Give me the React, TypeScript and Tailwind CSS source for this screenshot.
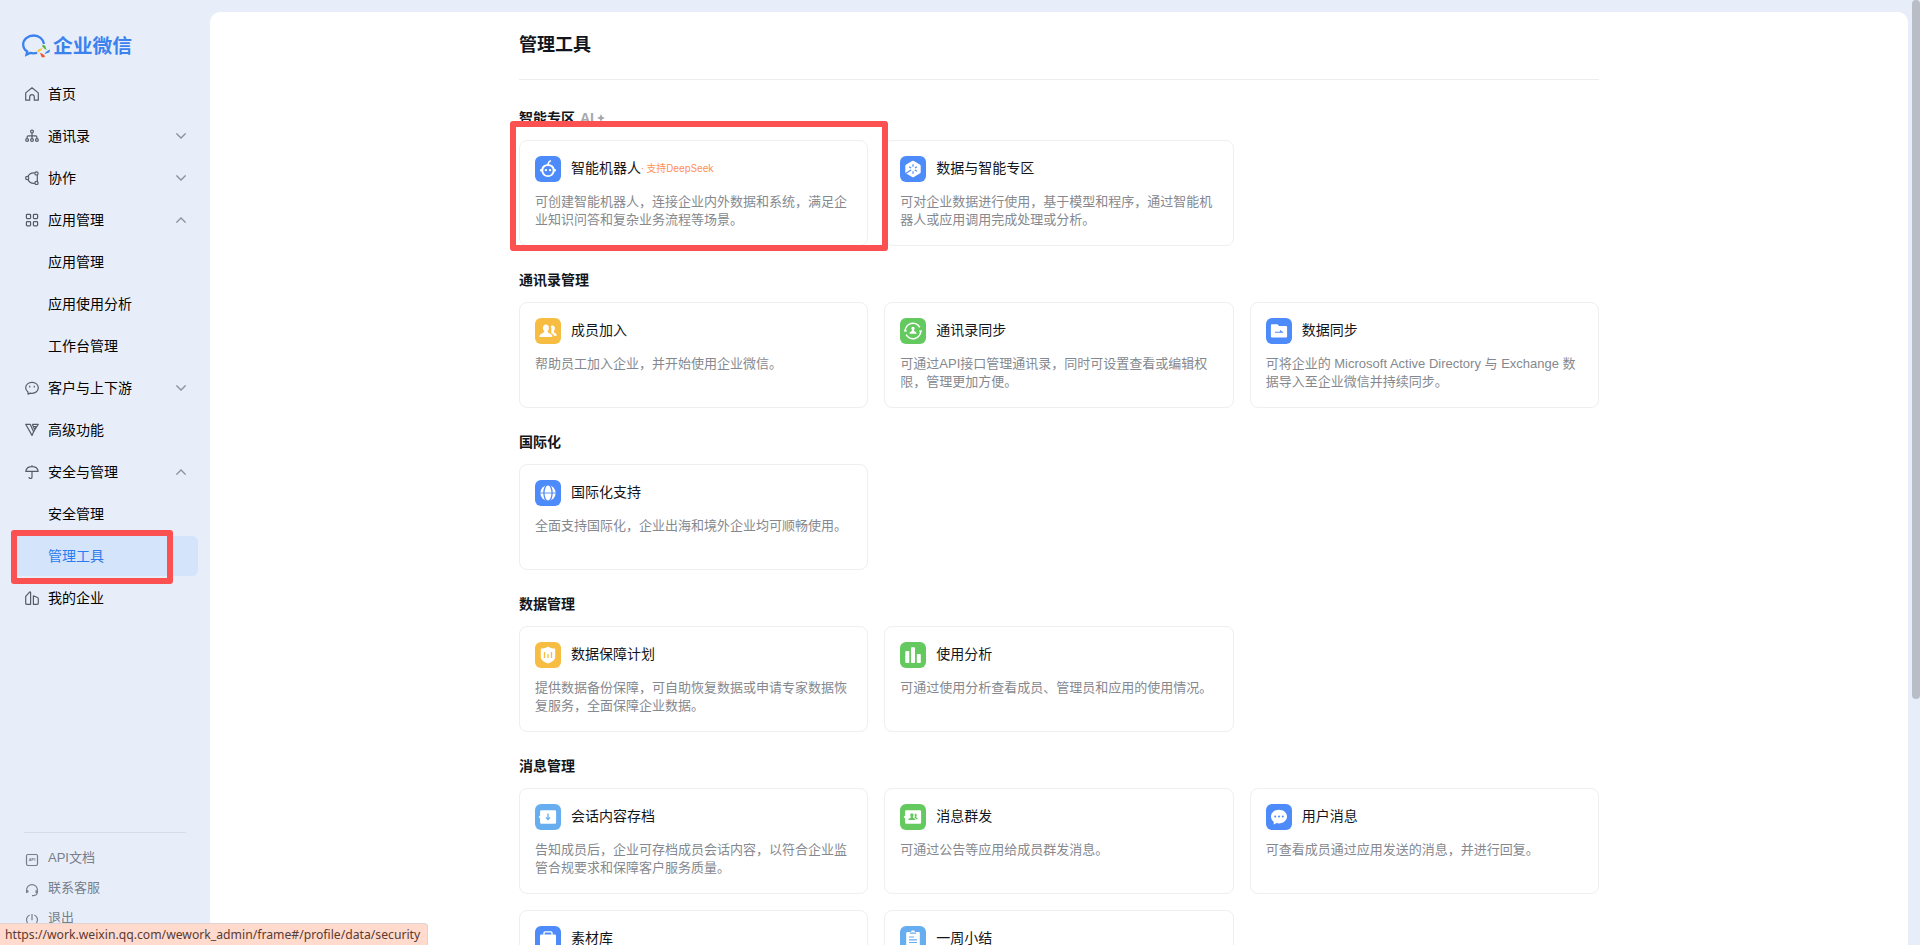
import { ReactNode } from "react";

type NavItem = {
  label: string;
  icon?: ReactNode;
  arrow?: "up" | "down";
  active?: boolean;
};

type Tool = {
  title: string;
  desc?: string;
  color: string;
  icon: ReactNode;
  tag?: string;
};

type Section = {
  title: string;
  ai?: boolean;
  tools: Tool[];
};

const BLUE = "bg-[#4d8bfa]";
const GREEN = "bg-[#64c95f]";
const YELLOW = "bg-[#f6bd42]";
const SKY = "bg-[#66aeef]";

const navItems: NavItem[] = [
  {
    label: "首页",
    icon: <path d="M.7 5.9 7 .8l6.300 5.100v7.300H9.300V9.900a2.300 2.300 0 0 0-4.600 0v3.300H.7Z" />,
  },
  {
    label: "通讯录",
    arrow: "down",
    icon: (
      <>
        <circle cx="7" cy="2.600" r="1.400" />
        <circle cx="2.100" cy="11" r="1.400" />
        <circle cx="7" cy="11" r="1.400" />
        <circle cx="11.900" cy="11" r="1.400" />
        <path d="M7 4v5.600M2.100 9.600V8.200q0-1.300 1.300-1.300h7.200q1.300 0 1.300 1.300v1.400" />
      </>
    ),
  },
  {
    label: "协作",
    arrow: "down",
    icon: (
      <>
        <circle cx="2.200" cy="7" r="1.600" />
        <circle cx="11.500" cy="2.400" r="1.600" />
        <circle cx="11.500" cy="11.900" r="1.600" />
        <path d="M3 5.500C4.200 3 6.500 1.600 9.800 2M12.300 4v6.300M3 8.500C4.200 11.300 6.500 12.700 9.800 12.400" />
      </>
    ),
  },
  {
    label: "应用管理",
    arrow: "up",
    icon: (
      <>
        <rect x="1.400" y="1.400" width="4.200" height="4.200" rx=".8" />
        <rect x="8.400" y="1.400" width="4.200" height="4.200" rx=".8" />
        <rect x="1.400" y="8.600" width="4.200" height="4.200" rx=".8" />
        <rect x="8.400" y="8.600" width="4.200" height="4.200" rx=".8" />
      </>
    ),
  },
  { label: "应用管理" },
  { label: "应用使用分析" },
  { label: "工作台管理" },
  {
    label: "客户与上下游",
    arrow: "down",
    icon: (
      <>
        <path d="M3 11.100C1.500 10 .7 8.500.7 6.800.7 3.600 3.500 1.300 7 1.300s6.300 2.300 6.300 5.500-2.800 5.500-6.300 5.500c-.7 0-1.200 0-1.800-.2L3.100 13.200Z" />
        <path d="M4.700 4.700v1.800M9.300 4.700v1.800" />
      </>
    ),
  },
  {
    label: "高级功能",
    icon: (
      <>
        <path d="M.7 1.300h4.500L8.600 8.800 7 12.400Z" />
        <path d="M7.300 1.300h6L8.600 8.800M7.300 1.300l2.300 5.200 1.700-3H8.300" />
      </>
    ),
  },
  {
    label: "安全与管理",
    arrow: "up",
    icon: <path d="M7 .2v1.400M.8 6.400C1.200 3.400 3.700 1.600 7 1.600s5.800 1.800 6.200 4.800ZM7 6.400v5.500q0 1.600-1.500 1.600T4 12.100" />,
  },
  { label: "安全管理" },
  { label: "管理工具", active: true },
  {
    label: "我的企业",
    icon: (
      <>
        <path d="M5.600 13.300H1.700q-1 0-1-1V5.400L4.800.9l.8.400Z" />
        <path d="M8.400 4.800l4 1.700q.9.400.9 1.300v4.500q0 1-1 1H8.400Z" />
      </>
    ),
  },
];

const footerItems: NavItem[] = [
  {
    label: "API文档",
    icon: (
      <>
        <rect x="1.500" y="1.500" width="11" height="11" rx="1.400" />
        <text x="7" y="8.200" fontSize="4" textAnchor="middle" fontWeight="bold" fill="currentColor" stroke="none">
          API
        </text>
      </>
    ),
  },
  {
    label: "联系客服",
    icon: <path d="M2.400 9.500h-.8V7a5.400 5.400 0 0 1 10.800 0v2.500h-1.300V7.200M2.800 7.200v2.300M12.200 9.500q-.3 3-3.700 3.100H7" />,
  },
  {
    label: "退出",
    icon: <path d="M4.600 2A5.500 5.500 0 1 0 9.400 2M7 1v6.200" />,
  },
];

const people = (
  <>
    <path d="M17.500 7.500c1.500 0 2.400 1.200 2.400 2.800 0 1.200-.5 2.200-1 2.800-.3.900 0 1.300 1 1.800 1.200.6 1.900 1.300 1.900 2.800h-3.100c-.4-1.300-1.300-2-2.700-2.700.4-.7.300-1.400.2-2 .5-1.500.4-3.300-.5-4.600.5-.6 1.100-.9 1.800-.9Z" />
    <path d="M10.900 6.600c1.800 0 3 1.400 3 3.300 0 1.400-.6 2.500-1.200 3.200-.2 1 .2 1.500 1.300 2 1.900.8 3.300 1.700 3.400 3.900H4.300c.1-2.200 1.500-3.100 3.500-3.900 1.100-.5 1.500-1 1.300-2-.6-.7-1.200-1.800-1.200-3.200 0-1.900 1.200-3.300 3-3.300Z" />
  </>
);

const sections: Section[] = [
  {
    title: "智能专区",
    ai: true,
    tools: [
      {
        title: "智能机器人",
        tag: "支持DeepSeek",
        desc: "可创建智能机器人，连接企业内外数据和系统，满足企业知识问答和复杂业务流程等场景。",
        color: BLUE,
        icon: (
          <>
            <path d="M13 8.200c3.700 0 6.100 2 6.500 4.700.9 0 1.500.5 1.500 1.300s-.6 1.300-1.500 1.400C19 18.800 16.500 21 13 21s-6-2.200-6.500-5.400C5.600 15.500 5 15 5 14.200s.6-1.300 1.500-1.300C6.900 10.200 9.300 8.200 13 8.200Z" />
            <path d="M13 8.800c0-2 .9-3.300 2.900-4.200" fill="none" stroke="white" strokeWidth="1.500" />
            <path d="M13 9.900c-2.900 0-4.700 1.700-4.700 4.300 0 2.900 1.800 5 4.700 5s4.700-2.100 4.700-5c0-2.600-1.800-4.300-4.700-4.300Z" fill="#4d8bfa" />
            <circle cx="10.900" cy="14.100" r="1.200" />
            <circle cx="15.100" cy="14.100" r="1.200" />
          </>
        ),
      },
      {
        title: "数据与智能专区",
        desc: "可对企业数据进行使用，基于模型和程序，通过智能机器人或应用调用完成处理或分析。",
        color: BLUE,
        icon: (
          <>
            <path d="M12.100 5q.9-.5 1.800 0l5.900 3.400q.9.500.9 1.500v6.200q0 1-.9 1.500L13.900 21q-.9.500-1.800 0l-5.900-3.400q-.9-.5-.9-1.500V9.900q0-1 .9-1.500Z" />
            <path d="M13 8.300v2.500M13 15.200v2.500M9.100 10.700l2 1.200M16.900 10.700l-2 1.200M5.900 17.300l5.200-3.200M16.900 15.300l-2-1.200" stroke="#4d8bfa" strokeWidth="1.200" />
          </>
        ),
      },
    ],
  },
  {
    title: "通讯录管理",
    tools: [
      { title: "成员加入", desc: "帮助员工加入企业，并开始使用企业微信。", color: YELLOW, icon: people },
      {
        title: "通讯录同步",
        desc: "可通过API接口管理通讯录，同时可设置查看或编辑权限，管理更加方便。",
        color: GREEN,
        icon: (
          <>
            <path d="M5.300 13.300A7.700 7.700 0 0 1 19.800 9.400M20.700 12.700A7.700 7.700 0 0 1 6.200 16.600" fill="none" stroke="white" strokeWidth="1.500" />
            <path d="M3.700 13.600 5.200 11l2 2.600ZM22.300 12.400 20.800 15l-2-2.600Z" />
            <path d="M13 8.800c1 0 1.600.7 1.600 1.700 0 .8-.4 1.300-.7 1.800 0 1.500 2.600 1 2.600 3.500h-7c0-2.500 2.600-2 2.600-3.500-.3-.5-.7-1-.7-1.800 0-1 .6-1.700 1.600-1.700Z" />
          </>
        ),
      },
      {
        title: "数据同步",
        desc: "可将企业的 Microsoft Active Directory 与 Exchange 数据导入至企业微信并持续同步。",
        color: BLUE,
        icon: (
          <>
            <path d="M6 6.200h5.400l1.700 1.900H20q1.100 0 1.100 1.100v9.300q0 1.100-1.100 1.100H6q-1.100 0-1.100-1.100V7.300Q4.900 6.200 6 6.200Z" />
            <path d="M9 13.700h5V12l3.300 2.300v.5H9Z" fill="#4d8bfa" />
          </>
        ),
      },
    ],
  },
  {
    title: "国际化",
    tools: [
      {
        title: "国际化支持",
        desc: "全面支持国际化，企业出海和境外企业均可顺畅使用。",
        color: BLUE,
        icon: (
          <>
            <ellipse cx="13" cy="13" rx="7.700" ry="7.700" />
            <path d="M5 13h16" stroke="#4d8bfa" strokeWidth=".9" />
            <ellipse cx="13" cy="13" rx="4.100" ry="8.300" fill="none" stroke="#4d8bfa" strokeWidth="1.300" />
          </>
        ),
      },
    ],
  },
  {
    title: "数据管理",
    tools: [
      {
        title: "数据保障计划",
        desc: "提供数据备份保障，可自助恢复数据或申请专家数据恢复服务，全面保障企业数据。",
        color: YELLOW,
        icon: (
          <>
            <path d="M13 4.400c2 1.400 4.400 2.100 7.200 2.200v8.200c0 3.600-3.800 5.600-7.200 6.800-3.400-1.200-7.200-3.200-7.200-6.800V6.600c2.800-.1 5.200-.8 7.200-2.200Z" />
            <path d="M9.500 10v6M13 12v4M16.500 10v6" stroke="#f6bd42" strokeWidth="1.300" />
          </>
        ),
      },
      {
        title: "使用分析",
        desc: "可通过使用分析查看成员、管理员和应用的使用情况。",
        color: GREEN,
        icon: (
          <>
            <rect x="5.300" y="9" width="4" height="12" rx=".8" />
            <rect x="11" y="5.300" width="4" height="15.700" rx=".8" />
            <rect x="16.800" y="12" width="4" height="9" rx=".8" />
          </>
        ),
      },
    ],
  },
  {
    title: "消息管理",
    tools: [
      {
        title: "会话内容存档",
        desc: "告知成员后，企业可存档成员会话内容，以符合企业监管合规要求和保障客户服务质量。",
        color: SKY,
        icon: (
          <>
            <path d="M6.300 6.200h13.600q1.200 0 1.200 1.200v11.200q0 1.200-1.200 1.200H6.300q-1.200 0-1.200-1.200v-4L3.600 13l1.500-1.600v-4q0-1.200 1.200-1.200Z" />
            <path d="M13 9.500v6M10.900 13.400l2.100 2.200 2.100-2.200" fill="none" stroke="#66aeef" strokeWidth="1.300" />
          </>
        ),
      },
      {
        title: "消息群发",
        desc: "可通过公告等应用给成员群发消息。",
        color: GREEN,
        icon: (
          <>
            <path d="M6.300 6.200h13.600q1.200 0 1.200 1.200v11.200q0 1.200-1.200 1.200H6.300q-1.200 0-1.200-1.200v-4L3.600 13l1.500-1.600v-4q0-1.200 1.200-1.200Z" />
            <g fill="#64c95f" transform="translate(6 5.800) scale(.54)">{people}</g>
          </>
        ),
      },
      {
        title: "用户消息",
        desc: "可查看成员通过应用发送的消息，并进行回复。",
        color: BLUE,
        icon: (
          <>
            <path d="M13 5.800c4.500 0 8 2.900 8 6.800s-3.500 6.800-8 6.800c-.9 0-1.700-.1-2.400-.3l-2.900 1.500.1-2.700C6 16.600 5 14.800 5 12.600c0-3.900 3.500-6.800 8-6.800Z" />
            <g fill="#4d8bfa">
              <circle cx="9.200" cy="12.600" r="1" />
              <circle cx="13" cy="12.600" r="1" />
              <circle cx="16.800" cy="12.600" r="1" />
            </g>
          </>
        ),
      },
      {
        title: "素材库",
        color: BLUE,
        icon: (
          <>
            <rect x="5" y="8.500" width="16" height="12.500" rx="1.300" />
            <path d="M9 8.800V6.900q0-1 1-1h6q1 0 1 1v1.900" fill="none" stroke="white" strokeWidth="1.400" />
          </>
        ),
      },
      {
        title: "一周小结",
        color: SKY,
        icon: (
          <>
            <path d="M7.200 6h3l.6-.1a2.300 2.300 0 0 1 4.400 0l.6.100h3q1 0 1 1v14q0 1-1 1H7.200q-1 0-1-1V7q0-1 1-1Z" />
            <path d="M9.800 7.200h6.400M9 11h5.200M9 13.800h8M9 16.500h8" stroke="#66aeef" strokeWidth="1.200" />
          </>
        ),
      },
    ],
  },
];

export default function App() {
  return (
    <div className="relative flex h-[945px] w-[1920px] overflow-hidden bg-[#e7eefa] font-['Liberation_Sans','Noto_Sans_CJK_SC',sans-serif] text-sm text-black">
      <Sidebar />
      <main className="mt-3 h-[933px] w-[1698px] overflow-hidden rounded-t-[10px] bg-white">
        <div className="ml-[309px] w-[1080px]">
          <h1 className="flex h-[68px] items-center border-b border-[#ebedf0] pb-0.5 text-lg font-bold text-[#12161c]">
            管理工具
          </h1>
          <div className="flex flex-col gap-6 pt-7">
            {sections.map((section) => (
              <ToolSection key={section.title} section={section} />
            ))}
          </div>
        </div>
      </main>
      <div className="ml-1 h-[699px] w-2 rounded-full bg-[#b9bdc6]" />

      <div className="absolute left-[11px] top-[530px] h-[54px] w-[162px] rounded-[3px] border-[6px] border-[#fc5151]" />
      <div className="absolute left-[510px] top-[121px] h-[130px] w-[378px] rounded-[3px] border-[6px] border-[#fc5151]" />
      <div className="absolute bottom-0 left-0 flex h-[22px] w-[428px] items-center whitespace-nowrap rounded-tr border-r border-t border-[#e0d3d2] bg-[#ffdacd] pl-[5px] font-['Noto_Sans',sans-serif] text-[12.200px] text-[#5a3a33]">
        https://work.weixin.qq.com/wework_admin/frame#/profile/data/security
      </div>
    </div>
  );
}

function Sidebar() {
  return (
    <aside className="flex w-[210px] shrink-0 flex-col px-3">
      <div className="flex h-[74px] items-center pl-[10px] pt-[17px]">
        <Logo />
        <span className="ml-[3px] text-[19.800px] font-bold leading-6 text-[#3b82ee]">企业微信</span>
      </div>
      <nav className="flex flex-col gap-0.5">
        {navItems.map((item, i) => (
          <a
            key={i}
            className={`flex h-10 items-center rounded-md pl-[13px] pr-3 ${item.active ? "bg-[#d4e4fa] text-[#2b7cf0]" : ""}`}
          >
            <NavIcon className="text-[#565c66]">{item.icon}</NavIcon>
            <span className="ml-[9px] flex-1">{item.label}</span>
            {item.arrow && (
              <svg width="10" height="6" viewBox="0 0 10 6" fill="none" stroke="#8b919c" strokeWidth="1.300">
                <path d={item.arrow === "down" ? "M.4.4 5 5 9.600.4" : "M.4 5.600 5 1l4.600 4.600"} />
              </svg>
            )}
          </a>
        ))}
      </nav>
      <div className="mx-3 mt-auto border-t border-[#d5dce9] pt-[10px] text-[13px] text-[#787e89]">
        {footerItems.map((item) => (
          <a key={item.label} className="flex h-[30px] items-center pl-px">
            <NavIcon className="mt-[3px]">{item.icon}</NavIcon>
            <span className="ml-[9px]">{item.label}</span>
          </a>
        ))}
      </div>
      <div className="h-3" />
    </aside>
  );
}

function NavIcon({ children, className }: { children: ReactNode; className: string }) {
  return (
    <svg
      width="14"
      height="14"
      viewBox="0 0 14 14"
      fill="none"
      stroke="currentColor"
      strokeWidth="1.200"
      strokeLinejoin="round"
      className={`shrink-0 ${className}`}
    >
      {children}
    </svg>
  );
}

function Logo() {
  return (
    <svg width="28" height="24" viewBox="0 0 28 24" fill="none">
      <path
        d="M22 10C21.400 4.800 16.800 1.500 11.800 1.500 5.800 1.500 1.200 5.500 1.200 10.500c0 3 1.500 5.400 4 7l-.7 3.100 3.600-1.700c2.300.6 4.500.6 7 0"
        stroke="#3b82ee"
        strokeWidth="2.300"
      />
      <path d="M19.800 11.800q2.300-1.800 3.800.8 0 2.200 1.400 3.400-2.600-.5-5.200-4.200Z" fill="#4db93c" />
      <path d="M27.800 15.400q.6 2.800-2 3.600-2 .3-3.200 1.600.2-2.700 5.200-5.200Z" fill="#3b82ee" />
      <path d="M23.300 22.300q-2.200 2.200-4.200-.1-.2-2.200-1.600-3.500 3 .2 5.800 3.600Z" fill="#f0582f" />
      <path d="M15.500 18.800q-.8-2.600 1.700-3.700 2.200-.3 3.400-1.600-.3 3-5.100 5.300Z" fill="#fbc531" />
    </svg>
  );
}

function ToolSection({ section }: { section: Section }) {
  return (
    <section>
      <h2 className="flex h-5 items-center text-sm font-bold text-[#12161c]">
        {section.title}
        {section.ai && (
          <span className="ml-[5px] flex items-center text-sm text-[#a5a8ad]">
            AI
            <svg width="8" height="8" viewBox="0 0 8 8" fill="currentColor" className="ml-[3px]">
              <path d="M4 0 5.200 2.800 8 4 5.200 5.200 4 8 2.800 5.200 0 4l2.800-1.200Z" />
            </svg>
          </span>
        )}
      </h2>
      <div className="mt-3 grid grid-cols-3 gap-4">
        {section.tools.map((tool) => (
          <ToolCard key={tool.title} tool={tool} />
        ))}
      </div>
    </section>
  );
}

function ToolCard({ tool }: { tool: Tool }) {
  return (
    <div className="h-[106px] rounded-lg border border-[#eeeff1] p-[15px]">
      <div className="flex items-center">
        <svg width="26" height="26" viewBox="0 0 26 26" fill="white" className={`rounded-md ${tool.color}`}>
          {tool.icon}
        </svg>
        <h3 className="-mt-0.5 ml-[10px] leading-5 text-[#12161c]">{tool.title}</h3>
        {tool.tag && (
          <span className="font-['Inter','Noto_Sans_CJK_SC',sans-serif] text-[9.800px] leading-4 text-[#ff8f54]">
            · {tool.tag}
          </span>
        )}
      </div>
      {tool.desc && <p className="mt-[11px] text-[13px] leading-[18px] text-[#85898f]">{tool.desc}</p>}
    </div>
  );
}
